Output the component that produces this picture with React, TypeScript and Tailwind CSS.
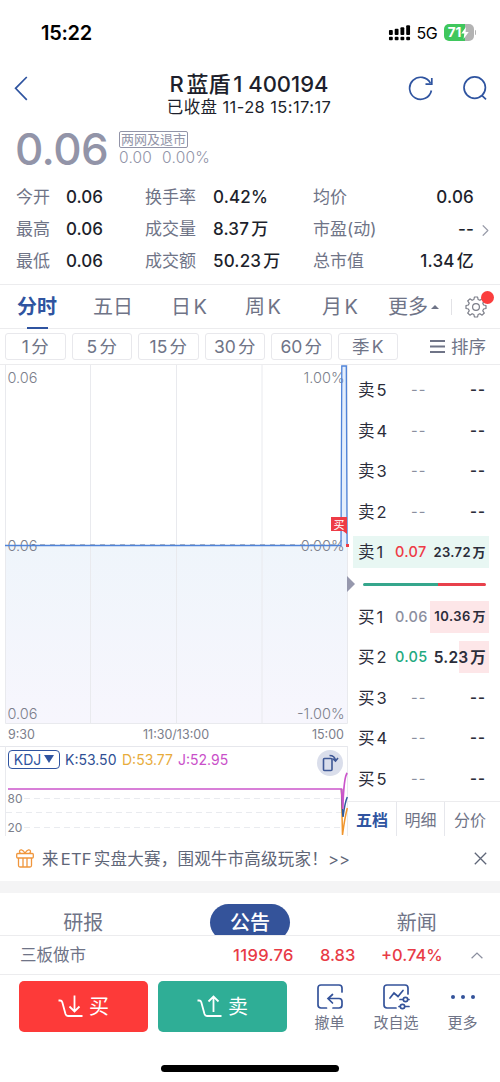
import type { ReactNode } from 'react'
import clsx from 'clsx'
import { ChevronRight } from 'lucide-react'

const STATS = [
  ['今开', '0.06', '换手率', '0.42%', '均价', '0.06'],
  ['最高', '0.06', '成交量', '8.37万', '市盈(动)', '--'],
  ['最低', '0.06', '成交额', '50.23万', '总市值', '1.34亿'],
]

const TABS = ['分时', '五日', '日K', '周K', '月K']
const PERIODS = ['1分', '5分', '15分', '30分', '60分', '季K']

type Level = {
  name: string
  price?: string
  volume?: string
  priceClass?: string
  volumeClass?: string
  barClass?: string
}

const SELLS: Level[] = [
  { name: '卖5' },
  { name: '卖4' },
  { name: '卖3' },
  { name: '卖2' },
  {
    name: '卖1',
    price: '0.07',
    volume: '23.72万',
    priceClass: 'text-[#ee3b46]',
    volumeClass: 'text-[13px] tracking-[0.4px]',
    barClass: 'w-[136px] bg-[#e8f7f3]',
  },
]

const BUYS: Level[] = [
  {
    name: '买1',
    price: '0.06',
    volume: '10.36万',
    priceClass: 'text-[#8b8f9f]',
    volumeClass: 'text-[13px] tracking-[0.5px]',
    barClass: 'w-[59px] bg-[#fde6e8]',
  },
  {
    name: '买2',
    price: '0.05',
    volume: '5.23万',
    priceClass: 'text-[#22a980]',
    volumeClass: 'text-[15.5px] tracking-[0.2px]',
    barClass: 'w-[30px] bg-[#fde6e8]',
  },
  { name: '买3' },
  { name: '买4' },
  { name: '买5' },
]

function StatusBar() {
  return (
    <div className="flex h-[65px] items-center pl-[41px] pr-[24px]">
      <span className="text-[20px] font-semibold tracking-[-0.3px] text-black">15:22</span>
      <svg className="ml-auto" width="23" height="17" viewBox="0 0 24 17" fill="#000">
        <rect x="1" y="6" width="4" height="5" rx="1" />
        <rect x="7" y="4.5" width="4" height="6.5" rx="1" />
        <rect x="13" y="3" width="4" height="8" rx="1" />
        <rect x="19" y="1" width="4" height="10" rx="1" />
        <rect x="1" y="13" width="4" height="3.5" rx="1" />
        <rect x="7" y="13" width="4" height="3.5" rx="1" />
        <rect x="13" y="13" width="4" height="3.5" rx="1" />
        <rect x="19" y="13" width="4" height="3.5" rx="1" />
      </svg>
      <span className="ml-[6px] w-[21px] text-[16px] tracking-[-0.4px] text-black">5G</span>
      <div className="ml-[6px] flex h-[17px] w-[30px] items-center justify-center overflow-hidden rounded-[5px] bg-linear-to-r from-[#3fc75d] from-70% to-[#b3b3b3] to-70% text-[13.5px] font-bold text-white">
        71
        <svg width="8" height="12" viewBox="0 0 8 12" fill="#fff">
          <path d="M5 0 0.3 6.6h3L2.6 12 7.7 5H4.6z" />
        </svg>
      </div>
      <span className="ml-px h-[5px] w-[1.5px] rounded-r bg-[#b3b3b3]" />
    </div>
  )
}

function Header() {
  return (
    <div className="flex h-[58px] justify-between pl-[14px] pr-[12px]">
      <svg className="mt-[11px]" width="14" height="25" viewBox="0 0 14 25" fill="none" stroke="#2f54a0" strokeWidth="1.7">
        <path d="M12.8 1 1.6 12.3 12.8 23.8" />
      </svg>
      <div className="ml-[62px] text-center text-[#1d1f2c]">
        <div className="mt-[5px] h-[26px] whitespace-nowrap text-[22px] font-medium leading-[28px]">R蓝盾1 400194</div>
        <div className="whitespace-nowrap text-[16.5px] leading-[22px] tracking-[0.4px]">已收盘 11-28 15:17:17</div>
      </div>
      <div className="flex gap-[28px] pt-[11px]">
        <svg width="26" height="26" viewBox="0 0 26 26" fill="none" stroke="#2f54a0" strokeWidth="1.7">
          <path d="M23.4 14.5A11 11 0 1 1 22.4 7.2" />
          <path d="M23.8 2v6.2h-6.3" />
        </svg>
        <svg width="26" height="26" viewBox="0 0 26 26" fill="none" stroke="#2f54a0" strokeWidth="1.7">
          <circle cx="12.7" cy="11.6" r="10.7" />
          <path d="m19.8 19.4 4.2 4" />
        </svg>
      </div>
    </div>
  )
}

function PriceBlock() {
  return (
    <div className="flex h-[59px] pl-[15px] pt-[4px] text-[#9294a8]">
      <span className="w-[104px] text-[44px] font-medium leading-[45px] tracking-[-0.6px]">0.06</span>
      <div>
        <div className="mt-[4px] h-[17px] w-[69px] whitespace-nowrap rounded-[2px] border border-[#9294a8] text-center text-[13px] leading-[15px]">
          两网及退市
        </div>
        <div className="flex gap-[10px] text-[15.5px] font-light leading-[20px] tracking-[0.2px]">
          <span>0.00</span>
          <span>0.00%</span>
        </div>
      </div>
    </div>
  )
}

function Stats() {
  return (
    <div className="h-[103px] border-b border-[#ececee]">
      {STATS.map((row, i) => (
        <div
          key={row[0]}
          className="grid h-8 grid-cols-[50px_79px_68px_100px_1fr_auto_26px] items-center whitespace-nowrap pl-[16px] text-[17px] font-medium text-[#1d1f2c]"
        >
          <span className="font-normal text-[#6f7487]">{row[0]}</span>
          <span>{row[1]}</span>
          <span className="font-normal text-[#6f7487]">{row[2]}</span>
          <span className="tracking-[0.15px]">{row[3]}</span>
          <span className="font-normal text-[#6f7487]">{row[4]}</span>
          <span className="tracking-[0.2px]">{row[5]}</span>
          {i === 1 ? <ChevronRight className="ml-[2px] size-[19px] text-[#9a9daa]" strokeWidth={1.5} /> : <span />}
        </div>
      ))}
    </div>
  )
}

function ChartTabs() {
  return (
    <div className="flex h-11 items-center border-b border-[#ececee] pl-[17px] text-[20px] text-[#6f7487]">
      {TABS.map((tab, i) => (
        <div
          key={tab}
          className={clsx(
            'relative flex h-11 items-center whitespace-nowrap pt-px',
            i === 0 && 'w-[76px] font-bold text-[#2f54a0]',
            i === 1 && 'w-[78px]',
            i === 2 && 'w-[74px]',
            i === 3 && 'w-[77px]',
            i === 4 && 'w-[66px]',
          )}
        >
          {tab}
          {i === 0 && <span className="absolute bottom-0 left-[10px] h-[2px] w-[21px] bg-[#2f54a0]" />}
        </div>
      ))}
      <span className="pt-px">更多</span>
      <span className="ml-[3px] h-0 w-0 border-x-[4px] border-b-[4px] border-x-transparent border-b-[#6f7487]" />
      <span className="ml-[12px] h-4 w-px bg-[#e2e2e6]" />
      <div className="relative ml-[13px]">
        <svg width="22" height="22" viewBox="0 0 22 22" fill="none" stroke="#7b7d88" strokeWidth="1.2" strokeLinejoin="round">
          <path d="M9.4 1h3.2l.5 2.5 1.8.8 2.2-1.5 2.2 2.2-1.5 2.2.8 1.8 2.4.5v3l-2.4.5-.8 1.8 1.5 2.2-2.2 2.2-2.2-1.5-1.8.8-.5 2.5H9.4l-.5-2.5-1.8-.8-2.2 1.5L2.7 17l1.5-2.2-.8-1.8L1 12.500v-3l2.400-.5.8-1.800L2.700 5l2.200-2.200 2.200 1.500 1.800-.8z" />
          <circle cx="11" cy="11" r="3.4" />
        </svg>
        <span className="absolute left-[16px] top-[-4.5px] size-[12.5px] rounded-full bg-[#fb3e3e]" />
      </div>
    </div>
  )
}

function Periods() {
  return (
    <div className="flex h-[36px] items-center gap-[6px] border-b border-[#ececee] pl-[5px] text-[17.5px] text-[#6f7487]">
      {PERIODS.map((p) => (
        <div
          key={p}
          className="flex h-[27px] w-[60.5px] items-center justify-center whitespace-nowrap rounded-[3px] border border-[#e8e8ec] pt-[2px]"
        >
          {p}
        </div>
      ))}
      <div className="ml-[26px] flex items-center gap-[6px]">
        <svg width="15" height="13" viewBox="0 0 15 13" stroke="#6f7487" strokeWidth="2">
          <path d="M0 1h15M0 6.5h15M0 12h15" />
        </svg>
        <span className="whitespace-nowrap pt-[2px]">排序</span>
      </div>
    </div>
  )
}

function PriceChart() {
  return (
    <svg className="block" width="349" height="360" viewBox="0 0 349 360" fill="none">
      <defs>
        <linearGradient id="area" x1="0" y1="0" x2="0" y2="1">
          <stop offset="0" stopColor="#eff5fb" />
          <stop offset="1" stopColor="#f7f6fd" />
        </linearGradient>
      </defs>
      <rect x="5.5" y="180" width="342" height="178" fill="url(#area)" />
      <rect x="341" y="1" width="6" height="180" fill="#e4eefc" />
      <path d="M5.5 0v358.500h342V0M90.500 0v358M176.500 0v358M262 0v358" stroke="#e9eaee" />
      <g fill="#7c7f8c" fontSize="14.5" fontWeight="300">
        <text x="7.500" y="17.500">0.06</text>
        <text x="7.500" y="185.500">0.06</text>
        <text x="7.500" y="353.500">0.06</text>
        <text x="344.500" y="17.500" textAnchor="end">1.00%</text>
        <text x="344.500" y="185.500" textAnchor="end">0.00%</text>
        <text x="344.500" y="353.500" textAnchor="end">-1.00%</text>
      </g>
      <path d="M40 179.500h300" stroke="#b4b9c2" strokeDasharray="5 5" />
      <path d="M5 180.500h336L341.800 1h4.500l.8 179" stroke="#4f83d8" strokeWidth="1.300" />
      <path d="M331 152h16v17l-4-3h-12z" fill="#ee3b46" />
      <text x="333.500" y="163.500" fontSize="11" fill="#fff">
        买
      </text>
      <rect x="346" y="179" width="3" height="3" fill="#ee3b46" />
    </svg>
  )
}

function KdjChart() {
  return (
    <div className="relative">
      <div className="flex h-[25px] items-center border-t border-[#e6e7ec] pl-[8px] text-[14px]">
        <div className="flex h-[19px] w-[52px] items-center justify-center gap-[3px] rounded-[4px] border border-[#2f54a0] text-[#2f54a0]">
          KDJ
          <span className="h-0 w-0 border-x-[5px] border-t-[8px] border-x-transparent border-t-[#2f54a0]" />
        </div>
        <span className="ml-[5px] w-[57px] text-[#2f4f94]">K:53.50</span>
        <span className="w-[56px] text-[#e8ac3c]">D:53.77</span>
        <span className="text-[#c94fc9]">J:52.95</span>
      </div>
      <svg className="block overflow-visible" width="349" height="65" viewBox="0 0 349 65" fill="none">
        <path d="M5.500-25V65M347.500-25V65" stroke="#e9eaee" />
        <path d="M24 27.500h318M6 41.500h336M24 56.500h318" stroke="#e9ebef" strokeDasharray="6 4" />
        <g fill="#7c7f8c" fontSize="12">
          <text x="7.500" y="31.500">80</text>
          <text x="7.500" y="60.500">20</text>
        </g>
        <path d="M341.500 18c.3 18 .6 30 1 46 1.500-12 3-20 4.800-27" stroke="#f0962e" strokeWidth="1.500" />
        <path d="M341.500 18c.5 12 .8 22 1.500 28 1.200-9 2.500-16 4.300-20" stroke="#2f5a9c" strokeWidth="1.500" />
        <path d="M8 18h333.500l1.300 20C343.500 15 345 4 347.300 2" stroke="#cb55cb" strokeWidth="1.700" />
      </svg>
      <div className="absolute left-[317px] top-[4px] flex size-[26px] items-center justify-center rounded-full bg-[#dadeeb]">
        <svg width="18" height="18" viewBox="0 0 18 18" fill="none" stroke="#3f5896" strokeWidth="1.600">
          <rect x="2.500" y="4.500" width="8.500" height="12" rx="1" />
          <path d="M8.500 1.500c3.500 0 5.500 1.500 6 5M11.500 4.500l3 2.500 2.500-3" />
        </svg>
      </div>
    </div>
  )
}

function LevelRow({ level }: { level: Level }) {
  return (
    <div className="flex h-[40.500px] items-center">
      <div className="relative flex h-[32px] w-[136px] items-center whitespace-nowrap text-[#2b2d3a]">
        {level.barClass && <span className={clsx('absolute right-0 top-0 h-full', level.barClass)} />}
        <span className="relative pl-[5px] pt-px text-[16.500px]">{level.name}</span>
        <span
          className={clsx(
            'absolute left-[42px] text-[14.500px]',
            level.price ? 'font-medium tracking-[0.3px]' : 'pl-[16px] tracking-[1px]',
            level.priceClass ?? 'text-[#8b8f9f]',
          )}
        >
          {level.price ?? '--'}
        </span>
        <span className={clsx('relative ml-auto pr-[3px] font-semibold', level.volumeClass ?? 'text-[15px] tracking-[1px]')}>
          {level.volume ?? '--'}
        </span>
      </div>
    </div>
  )
}

function OrderBook() {
  return (
    <div className="flex flex-1 flex-col pl-[5px]">
      <div className="pt-[5px]">
        {SELLS.map((l) => (
          <LevelRow key={l.name} level={l} />
        ))}
      </div>
      <div className="-ml-[6px] flex h-[24px] items-center pb-px">
        <span className="h-0 w-0 border-y-[8px] border-l-[8px] border-y-transparent border-l-[#9698ad]" />
        <div className="ml-[8px] flex h-[3px] w-[123px] overflow-hidden rounded-full">
          <span className="w-[75px] bg-[#35a68c]" />
          <span className="flex-1 bg-[#e8404b]" />
        </div>
      </div>
      <div>
        {BUYS.map((l) => (
          <LevelRow key={l.name} level={l} />
        ))}
      </div>
      <div className="mt-auto -ml-[5px] flex h-[35px] border-t border-[#ececee] text-[16px] text-[#6f7487]">
        <span className="flex w-[48px] items-center justify-center whitespace-nowrap pt-px font-bold text-[#2f54a0]">五档</span>
        <span className="flex w-[49px] items-center justify-center border-x border-[#e6e7ec] pt-px">明细</span>
        <span className="flex flex-1 items-center justify-center pr-[5px] pt-px">分价</span>
      </div>
    </div>
  )
}

function Banner() {
  return (
    <div className="flex h-[57px] items-center border-b-[12px] border-[#f4f4f5] pl-[16px] pr-[13px] text-[16.500px] text-[#5f6678]">
      <svg width="18" height="19" viewBox="0 0 18 19" fill="none" stroke="#f0963c" strokeWidth="1.300">
        <rect x="0.700" y="4.500" width="16.600" height="4.500" rx="1" />
        <path d="M2.500 9v7.500q0 1.500 1.500 1.500h10q1.500 0 1.500-1.500V9M7 9v9M11 9v9M9 4.300C7 .2 3.500 0 3.500 2.500c0 1 .5 1.500 1 2M9 4.300C11 .2 14.500 0 14.500 2.500c0 1-.5 1.500-1 2" />
      </svg>
      <span className="ml-[8px] whitespace-nowrap pt-px tracking-[0.220px]">来ETF实盘大赛，围观牛市高级玩家！&gt;&gt;</span>
      <svg className="ml-auto" width="13" height="13" viewBox="0 0 13 13" stroke="#5f6678" strokeWidth="1.300">
        <path d="m.8.8 11.400 11.400M12.200.8.8 12.200" />
      </svg>
    </div>
  )
}

function NewsTabs() {
  return (
    <div className="grid h-[43px] grid-cols-3 overflow-hidden border-b border-[#ececee] text-[20px] text-[#6f7487]">
      <span className="pt-[15px] text-center">研报</span>
      <div className="mx-auto mt-[11px] h-[37px] w-[80px] rounded-full bg-[#34539a] pt-px text-center font-medium leading-[37px] text-white">
        公告
      </div>
      <span className="pt-[15px] text-center">新闻</span>
    </div>
  )
}

function IndexRow() {
  return (
    <div className="flex h-[39px] items-center border-b border-[#ececee] pl-[20px] pr-[17px] text-[16.500px] font-medium text-[#e83b46]">
      <span className="w-[213px] font-normal text-[#6f7487]">三板做市</span>
      <span className="w-[87px] tracking-[0.350px]">1199.76</span>
      <span className="w-[61px]">8.83</span>
      <span>+0.74%</span>
      <svg className="ml-auto" width="12" height="7" viewBox="0 0 12 7" fill="none" stroke="#8b8f9f" strokeWidth="1.200">
        <path d="M.6 6.300 6 1l5.400 5.300" />
      </svg>
    </div>
  )
}

function Action({ label, className, children }: { label: string; className: string; children: ReactNode }) {
  return (
    <div className={clsx('flex flex-col items-center whitespace-nowrap text-[15px] text-[#6f7487]', className)}>
      <svg width="28" height="26" viewBox="0 0 28 26" fill="none" stroke="#34539a" strokeWidth="1.700" strokeLinecap="round">
        {children}
      </svg>
      <span className="mt-[3px] leading-[20px]">{label}</span>
    </div>
  )
}

function TradeBar() {
  return (
    <div className="flex pl-[19px] pt-[6px]">
      <button className="flex h-[51px] w-[129px] items-center justify-center gap-[6px] rounded-[5px] bg-[#fd3a39] text-[20px] text-white">
        <svg width="25" height="23" viewBox="0 0 25 23" fill="none" stroke="#fff" strokeWidth="1.800">
          <path d="M.5 5.500h1.500q1.800 0 2.300 1.800L7.500 19q.6 2 2.500 2h14.500M16.500.5v15.500M11.500 11.500l5 5 5-5" />
        </svg>
        买
      </button>
      <button className="ml-[10px] flex h-[51px] w-[129px] items-center justify-center gap-[6px] rounded-[5px] bg-[#2fae96] text-[20px] text-white">
        <svg width="25" height="23" viewBox="0 0 25 23" fill="none" stroke="#fff" strokeWidth="1.800">
          <path d="M.5 5.500h1.500q1.800 0 2.300 1.800L7.500 19q.6 2 2.500 2h14.500M16.500 17V1.500M11.500 6.500l5-5 5 5" />
        </svg>
        卖
      </button>
      <Action label="撤单" className="ml-[20px] mt-[3px] w-[45px]">
        <path d="M10.500 24H5q-3 0-3-3V4q0-3 3-3h18q3 0 3 3v4M17 24h6q3 0 3-3v-3.500q0-3-3-3H12.500M16.500 10.500l-4.500 4 4.500 4.500" />
      </Action>
      <Action label="改自选" className="ml-[19px] mt-[3px] w-[50px]">
        <path d="M14 24H5q-3 0-3-3V4q0-3 3-3h18q3 0 3 3v6M8 14l4-5 4 3.500 5-6" />
        <path d="M18 15.500h3M26 15.500h1M17 22.500h1M23 22.500h4" />
        <circle cx="23.500" cy="15.500" r="2.200" />
        <circle cx="20.500" cy="22.500" r="2.200" />
      </Action>
      <Action label="更多" className="ml-[19px] mt-[3px] w-[45px]">
        <g fill="#34539a" stroke="none">
          <circle cx="4" cy="13" r="2" />
          <circle cx="14" cy="13" r="2" />
          <circle cx="24" cy="13" r="2" />
        </g>
      </Action>
    </div>
  )
}

export default function App() {
  return (
    <div className="flex h-[1082px] w-[500px] flex-col overflow-hidden bg-white font-['Inter','Noto_Sans_CJK_SC',sans-serif] [text-autospace:normal]">
      <StatusBar />
      <Header />
      <PriceBlock />
      <Stats />
      <ChartTabs />
      <Periods />
      <div className="flex h-[471px]">
        <div className="w-[348px]">
          <PriceChart />
          <div className="grid h-[21px] grid-cols-3 items-center pl-[8px] pr-[4px] text-[12.500px] text-[#7b7e8b]">
            <span>9:30</span>
            <span className="text-center">11:30/13:00</span>
            <span className="text-right">15:00</span>
          </div>
          <KdjChart />
        </div>
        <OrderBook />
      </div>
      <Banner />
      <NewsTabs />
      <IndexRow />
      <TradeBar />
      <div className="mx-auto mb-[10px] mt-auto h-[7px] w-[178px] shrink-0 rounded-full bg-black" />
    </div>
  )
}
